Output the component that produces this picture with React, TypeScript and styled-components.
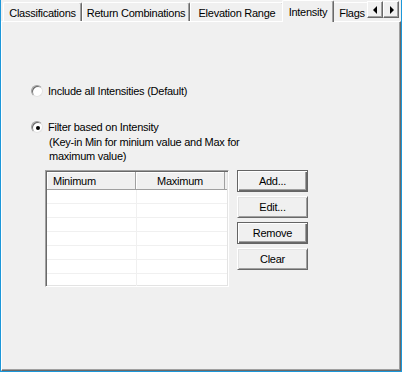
import styled, { createGlobalStyle } from "styled-components";

const GlobalStyle = createGlobalStyle`
  html, body {
    margin: 0;
    padding: 0;
    background: #f0f0f0;
  }
  body {
    font-family: "Liberation Sans", Arial, sans-serif;
    font-size: 11px;
    letter-spacing: -0.25px;
    color: #000;
  }
  * {
    box-sizing: border-box;
  }
`;

const Window = styled.div`
  width: 402px;
  height: 372px;
  display: flex;
  flex-direction: column;
  background: #f0f0f0;
  border-left: 1px solid #1c97d9;
  border-right: 1px solid #1c97d9;
  border-bottom: 1px solid #1c97d9;
`;

const TabStrip = styled.div`
  display: flex;
  height: 21px;
  flex-shrink: 0;
  position: relative;
  z-index: 1;
`;

const TabsViewport = styled.div`
  flex: 1;
  display: flex;
  align-items: flex-start;
  padding-left: 2px;
  overflow: hidden;
  height: 22px;
`;

const Tab = styled.div<{ $width: number; $active?: boolean }>`
  flex-shrink: 0;
  width: ${(p) => p.$width}px;
  height: ${(p) => (p.$active ? 22 : 19)}px;
  margin-top: ${(p) => (p.$active ? 0 : 2)}px;
  margin-left: ${(p) => (p.$active ? -2 : 0)}px;
  margin-right: ${(p) => (p.$active ? -2 : 0)}px;
  padding-top: ${(p) => (p.$active ? 0 : 2)}px;
  display: flex;
  align-items: center;
  justify-content: center;
  white-space: nowrap;
  background: #f0f0f0;
  border-top: 1px solid #fff;
  border-left: 1px solid #fff;
  border-right: 1px solid #696969;
  border-radius: 2px 2px 0 0;
  box-shadow: inset -1px 0 0 #a0a0a0;
  position: relative;
  z-index: ${(p) => (p.$active ? 2 : 0)};
`;

const ScrollArrows = styled.div`
  display: flex;
  width: 34px;
  padding: 1px 2px 0 0;
  flex-shrink: 0;
`;

const ArrowButton = styled.div<{ $dir: "left" | "right" }>`
  width: 16px;
  height: 17px;
  display: flex;
  align-items: center;
  justify-content: center;
  background: #f0f0f0;
  border: 1px solid;
  border-color: #fff #696969 #696969 #fff;
  box-shadow: inset -1px -1px 0 #a0a0a0;

  &::before {
    content: "";
    width: 0;
    height: 0;
    border-top: 4px solid transparent;
    border-bottom: 4px solid transparent;
    ${(p) =>
      p.$dir === "left"
        ? "border-right: 4px solid #000; margin-left: -1px;"
        : "border-left: 4px solid #000; margin-left: 1px;"}
  }
`;

const Panel = styled.div`
  flex: 1;
  border-top: 1px solid #fff;
  border-left: 1px solid #fff;
  border-right: 1px solid #696969;
  border-bottom: 1px solid #696969;
  box-shadow: inset -1px -1px 0 #a0a0a0;
  padding: 62px 0 0 29px;
`;

const RadioRow = styled.div<{ $gap?: number }>`
  display: flex;
  align-items: center;
  gap: 5px;
  height: 14px;
  margin-bottom: ${(p) => p.$gap ?? 0}px;
`;

const RadioDot = styled.span<{ $checked?: boolean }>`
  width: 12px;
  height: 12px;
  border-radius: 50%;
  background: #fff;
  border: 1px solid;
  border-color: #a0a0a0 #e3e3e3 #e3e3e3 #a0a0a0;
  box-shadow: inset 1px 1px 0 #696969;
  display: flex;
  align-items: center;
  justify-content: center;

  &::after {
    content: "";
    display: ${(p) => (p.$checked ? "block" : "none")};
    width: 4px;
    height: 4px;
    border-radius: 50%;
    background: #000;
    margin: 1px 0 0 1px;
  }
`;

const Hint = styled.div`
  margin: 1px 0 0 18px;
  width: 200px;
  line-height: 14px;
`;

const ListArea = styled.div`
  display: flex;
  gap: 8px;
  margin: 7px 0 0 14px;
`;

const ListBox = styled.div`
  width: 184px;
  height: 117px;
  background: #fff;
  border: 1px solid;
  border-color: #a0a0a0 #fff #fff #a0a0a0;
  box-shadow: inset 1px 1px 0 #696969, inset -1px -1px 0 #e3e3e3;
  padding: 1px;
  overflow: hidden;
`;

const HeaderRow = styled.div`
  display: flex;
  height: 18px;
  background: #f0f0f0;
`;

const HeaderCell = styled.div<{ $width?: number; $align?: string }>`
  ${(p) => (p.$width ? `width: ${p.$width}px; flex-shrink: 0; padding: 0 6px;` : "flex: 1; min-width: 0;")}
  display: flex;
  align-items: center;
  justify-content: ${(p) => p.$align ?? "flex-start"};
  background: #f0f0f0;
  border-bottom: 1px solid #a0a0a0;
  border-right: ${(p) => (p.$width ? "1px solid #a0a0a0" : "none")};
  box-shadow: ${(p) => (p.$width ? "inset 1px 1px 0 #fff" : "none")};
`;

const Row = styled.div`
  display: flex;
  height: 14px;
  border-bottom: 1px solid #f0f0f0;
`;

const Cell = styled.div<{ $width: number }>`
  width: ${(p) => p.$width}px;
  flex-shrink: 0;
  border-right: 1px solid #f0f0f0;
`;

const ButtonColumn = styled.div`
  display: flex;
  flex-direction: column;
  gap: 4px;
`;

const Button = styled.div<{ $strong?: boolean }>`
  width: 71px;
  height: 22px;
  display: flex;
  align-items: center;
  justify-content: center;
  background: #f0f0f0;
  border: 1px solid;
  ${(p) =>
    p.$strong
      ? `border-color: #646464;
         box-shadow: inset 1px 1px 0 #fff, inset -1px -1px 0 #696969, inset -2px -2px 0 #a0a0a0;`
      : `border-color: #fff #696969 #696969 #fff;
         box-shadow: inset 1px 1px 0 #e3e3e3, inset -1px -1px 0 #a0a0a0;`}
`;

const tabs = [
  { label: "Classifications", width: 79 },
  { label: "Return Combinations", width: 108 },
  { label: "Elevation Range", width: 94 },
  { label: "Intensity", width: 52, active: true },
  { label: "Flags", width: 40 },
];

const buttons = [
  { label: "Add...", strong: true },
  { label: "Edit..." },
  { label: "Remove", strong: true },
  { label: "Clear" },
];

export default function App() {
  return (
    <>
      <GlobalStyle />
      <Window>
        <TabStrip>
          <TabsViewport>
            {tabs.map((t) => (
              <Tab key={t.label} $width={t.width} $active={t.active}>
                {t.label}
              </Tab>
            ))}
          </TabsViewport>
          <ScrollArrows>
            <ArrowButton $dir="left" />
            <ArrowButton $dir="right" />
          </ScrollArrows>
        </TabStrip>
        <Panel>
          <RadioRow $gap={22}>
            <RadioDot />
            <span>Include all Intensities (Default)</span>
          </RadioRow>
          <RadioRow>
            <RadioDot $checked />
            <span>Filter based on Intensity</span>
          </RadioRow>
          <Hint>(Key-in Min for minium value and Max for maximum value)</Hint>
          <ListArea>
            <ListBox>
              <HeaderRow>
                <HeaderCell $width={89}>Minimum</HeaderCell>
                <HeaderCell $width={89} $align="center">
                  Maximum
                </HeaderCell>
                <HeaderCell />
              </HeaderRow>
              {Array.from({ length: 7 }).map((_, i) => (
                <Row key={i}>
                  <Cell $width={90} />
                </Row>
              ))}
            </ListBox>
            <ButtonColumn>
              {buttons.map((b) => (
                <Button key={b.label} $strong={b.strong}>
                  {b.label}
                </Button>
              ))}
            </ButtonColumn>
          </ListArea>
        </Panel>
      </Window>
    </>
  );
}
